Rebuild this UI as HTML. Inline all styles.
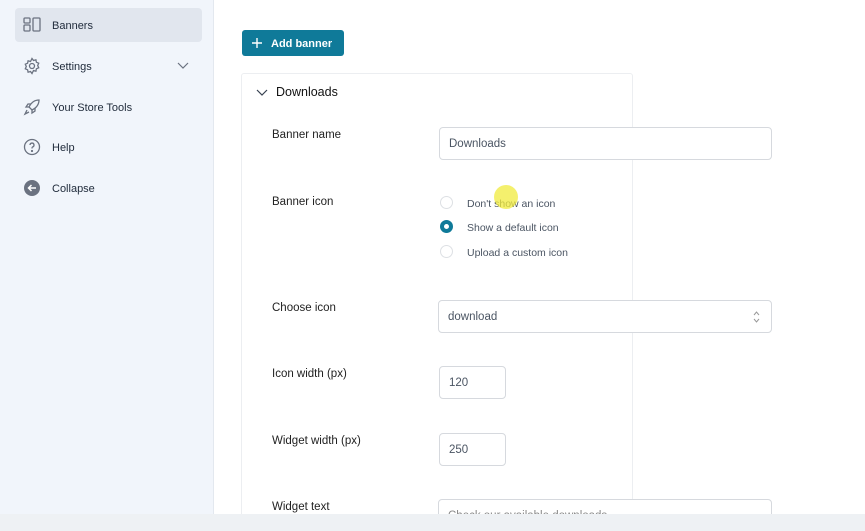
<!DOCTYPE html>
<html><head><style>
*{box-sizing:border-box;margin:0;padding:0}
html,body{width:865px;height:531px;overflow:hidden}
body{background:#fff;font-family:"Liberation Sans",sans-serif;position:relative;color:#1f2937}
.side{position:absolute;left:0;top:0;width:214px;height:531px;background:#f1f5fb;border-right:1px solid #e3e8ef}
.nav{position:absolute;left:15px;width:187px;height:34px;border-radius:4px;font-size:11px;color:#1f2a3a}
.nav span{position:absolute;left:37px;top:12px}
.nav svg{position:absolute;left:8px;top:8px}
.sel{background:#e1e6ee}
.btn{position:absolute;left:242px;top:30px;width:102px;height:26px;background:#0f7a99;border-radius:3px;color:#fff;font-size:11px;font-weight:bold}
.card{position:absolute;left:241px;top:73px;width:392px;height:470px;border:1px solid #eceef1;border-radius:3px}
.lbl{position:absolute;left:272px;font-size:11.5px;color:#222}
.inp{position:absolute;border:1px solid #d6d9de;border-radius:4px;background:#fff;font-size:11.5px;color:#4b5563;padding-left:9px;display:flex;align-items:center}
.r{position:absolute;left:440px;width:13px;height:13px;border-radius:50%;border:1px solid #dde0e4}
.rt{position:absolute;left:467px;font-size:10.5px;color:#4b5563}
.bottom{position:absolute;left:0;top:514px;width:865px;height:17px;background:#eef1f4}
</style></head><body>
<div class="side">
<div class="nav sel" style="top:8px"><svg width="18" height="18" viewBox="0 0 18 18" fill="none" stroke="#6b7280" stroke-width="1.3"><rect x="1" y="2" width="6" height="5" rx="1"/><rect x="1" y="9" width="6" height="6" rx="1"/><rect x="10" y="2" width="7" height="13" rx="1"/></svg><span>Banners</span></div>
<div class="nav" style="top:49px"><svg width="18" height="18" viewBox="0 0 18 18" fill="none" stroke="#6b7280" stroke-width="1.3"><circle cx="9" cy="9" r="2.5"/><path d="M9 1.5l1.5 2 2.4-.7.5 2.4 2.3 1-1 2.3 1 2.3-2.3 1-.5 2.4-2.4-.7L9 16.5l-1.5-2-2.4.7-.5-2.4-2.3-1 1-2.3-1-2.3 2.3-1 .5-2.4 2.4.7z"/></svg><span>Settings</span><svg style="left:162px;top:13px" width="12" height="8" viewBox="0 0 12 8" fill="none" stroke="#6b7280" stroke-width="1.2"><path d="M1 1l5 5 5-5"/></svg></div>
<div class="nav" style="top:90px"><svg width="18" height="18" viewBox="0 0 18 18" fill="none" stroke="#6b7280" stroke-width="1.3"><path d="M16 2c-5 0-8 3-10 7l3 3c4-2 7-5 7-10z"/><path d="M6 9l-3 0 2-3h3M9 12v3l3-2v-3M4 12l-2 4 4-2"/></svg><span>Your Store Tools</span></div>
<div class="nav" style="top:130px"><svg width="18" height="18" viewBox="0 0 18 18" fill="none" stroke="#6b7280" stroke-width="1.3"><circle cx="9" cy="9" r="7.5"/><path d="M7 7a2 2 0 1 1 2.5 2c-.5.2-.5.7-.5 1.5"/><circle cx="9" cy="13" r=".5" fill="#6b7280"/></svg><span>Help</span></div>
<div class="nav" style="top:171px"><svg width="18" height="18" viewBox="0 0 18 18"><circle cx="9" cy="9" r="8" fill="#6b7280"/><path d="M13 9H5.5M8.5 6L5.5 9l3 3" stroke="#fff" stroke-width="1.5" fill="none"/></svg><span>Collapse</span></div>
</div>
<div class="btn"><svg style="position:absolute;left:10px;top:8px" width="10" height="10" viewBox="0 0 10 10" stroke="#fff" stroke-width="1.4"><path d="M5 0v10M0 5h10"/></svg><span style="position:absolute;left:29px;top:8px">Add banner</span></div>
<div class="card"></div>
<svg style="position:absolute;left:256px;top:89px" width="12" height="8" viewBox="0 0 12 8" fill="none" stroke="#374151" stroke-width="1.2"><path d="M1 1l5 5 5-5"/></svg>
<div style="position:absolute;left:276px;top:85px;font-size:12.5px;color:#111">Downloads</div>
<div class="lbl" style="top:129px">Banner name</div>
<div class="inp" style="left:439px;top:127px;width:333px;height:33px">Downloads</div>
<div class="lbl" style="top:196px">Banner icon</div>
<div class="r" style="top:196px"></div><div class="rt" style="top:198px">Don't show an icon</div>
<div class="r" style="top:220px;border:4px solid #0f7a99;background:#fff"></div><div class="rt" style="top:222px">Show a default icon</div>
<div class="r" style="top:245px"></div><div class="rt" style="top:247px">Upload a custom icon</div>
<div style="position:absolute;left:494px;top:185px;width:24px;height:24px;border-radius:50%;background:rgba(240,235,60,.75)"></div>
<div class="lbl" style="top:302px">Choose icon</div>
<div class="inp" style="left:438px;top:300px;width:334px;height:33px">download<svg style="position:absolute;right:11px;top:10px" width="7" height="12" viewBox="0 0 7 12" fill="none" stroke="#999" stroke-width="1"><path d="M1 4l2.5-3 2.5 3M1 8l2.5 3 2.5-3"/></svg></div>
<div class="lbl" style="top:368px">Icon width (px)</div>
<div class="inp" style="left:439px;top:366px;width:67px;height:33px">120</div>
<div class="lbl" style="top:435px">Widget width (px)</div>
<div class="inp" style="left:439px;top:433px;width:67px;height:33px">250</div>
<div class="lbl" style="top:501px">Widget text</div>
<div class="inp" style="left:438px;top:499px;width:334px;height:33px;align-items:flex-start;padding-top:10px;color:#888">Check our available downloads</div>
<div class="bottom"></div>
</body></html>
